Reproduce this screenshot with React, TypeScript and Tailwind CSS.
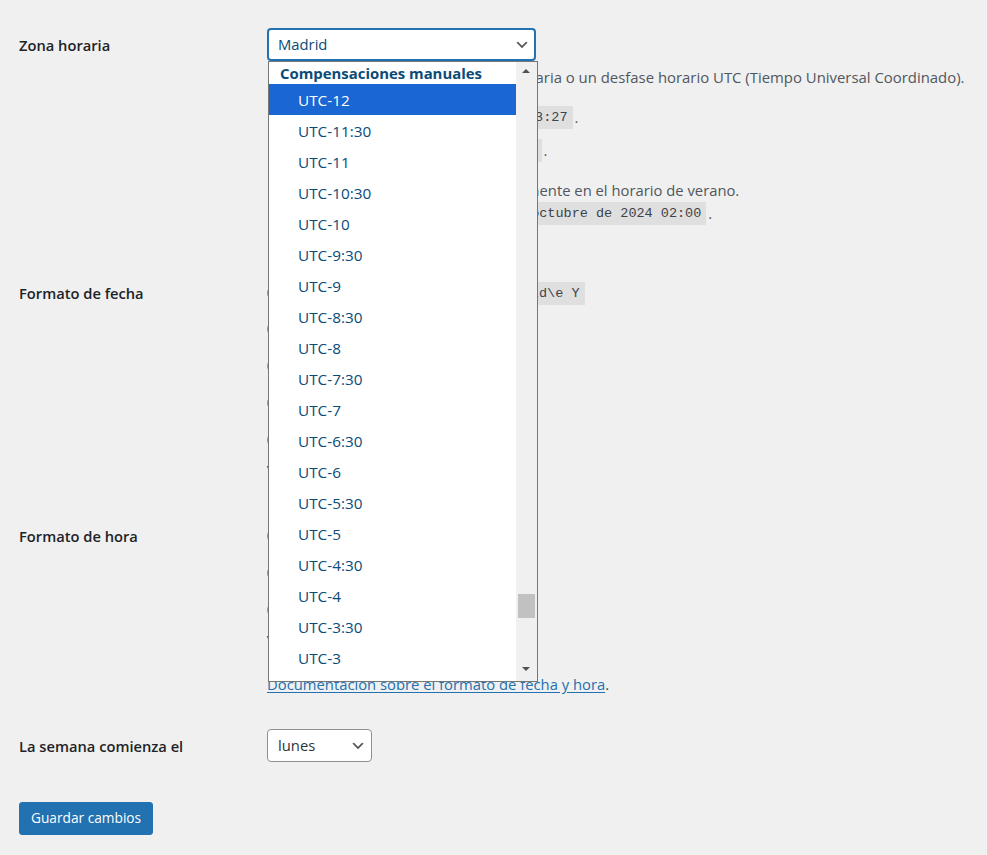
import React from "react";

const ITEMS = [
  "UTC-12", "UTC-11:30", "UTC-11", "UTC-10:30", "UTC-10", "UTC-9:30", "UTC-9", "UTC-8:30", "UTC-8",
  "UTC-7:30", "UTC-7", "UTC-6:30", "UTC-6", "UTC-5:30", "UTC-5", "UTC-4:30", "UTC-4", "UTC-3:30", "UTC-3", "UTC-2:30",
];

function Chevron() {
  return (
    <svg width="16" height="16" viewBox="0 0 20 20" aria-hidden="true">
      <path d="M5 6l5 5 5-5 2 1-7 7-7-7 2-1z" fill="#555" />
    </svg>
  );
}

function Code({ children }: { children: React.ReactNode }) {
  return (
    <code className="bg-[#dfdfdf] px-[5px] pt-[3px] pb-[2px] font-['Liberation_Mono',monospace] text-[13.5px] leading-[18px] text-[#3c434a]">
      {children}
    </code>
  );
}

function Radio({ checked = false }: { checked?: boolean }) {
  return (
    <span className="mr-[4px] flex h-[16px] w-[16px] shrink-0 items-center justify-center rounded-full border border-[#8c8f94] bg-white">
      {checked && <span className="h-[8px] w-[8px] rounded-full bg-[#3582c4]" />}
    </span>
  );
}

function Dropdown() {
  return (
    <div className="absolute left-[1px] top-[33px] z-10 flex h-[621px] w-[270px] border border-[#767676] bg-white">
      <div className="flex-1 overflow-hidden">
        <div className="h-[22px] pl-[11px] text-[14.9px] font-bold leading-[22px] text-[#0a4b78]">Compensaciones manuales</div>
        {ITEMS.map((t, i) => (
          <div
            key={t}
            className={
              i === 0
                ? "h-[31px] bg-[#1a66d3] pl-[29px] text-[15.3px] leading-[32px] text-white"
                : "h-[31px] pl-[29px] text-[15.3px] leading-[32px] text-[#0a4b78]"
            }
          >
            {t}
          </div>
        ))}
      </div>
      <div className="relative w-[21px] bg-[#f0f0f0]">
        <span className="absolute left-[6px] top-[7px] h-0 w-0 border-x-[4px] border-b-[4px] border-x-transparent border-b-[#505050]" />
        <span className="absolute left-[2px] top-[532px] h-[24px] w-[17px] bg-[#c1c1c1]" />
        <span className="absolute left-[6px] top-[605px] h-0 w-0 border-x-[4px] border-t-[4px] border-x-transparent border-t-[#505050]" />
      </div>
    </div>
  );
}

const LINE = "flex h-[20px] items-center whitespace-nowrap";

export default function App() {
  return (
    <div className="relative min-h-[855px] bg-[#f0f0f0] pl-[19px] pt-[28px] font-['Open_Sans',sans-serif] text-[14.8px] text-[#3c434a]">
      {/* Zona horaria */}
      <div className="flex">
        <div className="w-[248px] shrink-0 pt-[7px] text-[14.7px] font-semibold leading-[20px] text-[#1d2327]">Zona horaria</div>
        <div className="min-w-0 flex-1">
          <div className="relative w-[269px]">
            <div className="flex h-[33px] items-center justify-between rounded-[4px] border-2 border-[#2271b1] bg-white pl-[9px] pr-[4px] text-[#0a4b78]">
              <span>Madrid</span>
              <Chevron />
            </div>
            <Dropdown />
          </div>
          <div className={`mt-[6px] ${LINE} text-[14.9px] text-[#50575e]`}>
            Elige una ciudad en tu misma zona horaria o un desfase horario UTC (Tiempo Universal Coordinado).
          </div>
          <div className={`mt-[20px] ${LINE} text-[#50575e]`}>
            <span>La hora universal es&nbsp;</span>
            <Code>08/10/2024 11:43:27</Code>
            <span className="ml-[2px]">.</span>
          </div>
          <div className={`mt-[13px] ${LINE} text-[#50575e]`}>
            <span>La hora local es&nbsp;</span>
            <Code>08/10/2024 13:43:27</Code>
            <span className="ml-[2px]">.</span>
          </div>
          <div className={`mt-[20px] ${LINE} text-[#50575e]`}>
            Esta zona horaria se encuentra actualmente en el horario de verano.
          </div>
          <div className={`mt-[3px] ${LINE} text-[#50575e]`}>
            <span>La hora estándar comienza el:&nbsp;</span>
            <Code>27 de octubre de 2024 02:00</Code>
            <span className="ml-[2px]">.</span>
          </div>
        </div>
      </div>

      {/* Formato de fecha */}
      <div className="mt-[60px] flex">
        <div className="w-[248px] shrink-0 text-[14.7px] font-semibold leading-[20px] text-[#1d2327]">Formato de fecha</div>
        <div className="flex flex-col">
          <label className={LINE}>
            <Radio checked />
            <span className="ml-[4px] w-[162px]">8 de octubre de 2024</span>
            <Code>j \d\e F \d\e Y</Code>
          </label>
          <label className={`mt-[16px] ${LINE}`}>
            <Radio />
            <span className="ml-[4px] w-[162px]">2024-10-08</span>
            <Code>Y-m-d</Code>
          </label>
          <label className={`mt-[17px] ${LINE}`}>
            <Radio />
            <span className="ml-[4px] w-[162px]">10/08/2024</span>
            <Code>m/d/Y</Code>
          </label>
          <label className={`mt-[17px] ${LINE}`}>
            <Radio />
            <span className="ml-[4px] w-[162px]">08/10/2024</span>
            <Code>d/m/Y</Code>
          </label>
          <label className={`mt-[17px] ${LINE}`}>
            <Radio />
            <span className="ml-[4px]">Personalizada:</span>
          </label>
          <div className={`mt-[10px] ${LINE}`}>
            <strong className="font-semibold text-[#1d2327]">Vista previa:</strong>&nbsp;8 de octubre de 2024
          </div>
        </div>
      </div>

      {/* Formato de hora */}
      <div className="mt-[46px] flex">
        <div className="w-[248px] shrink-0 text-[14.7px] font-semibold leading-[20px] text-[#1d2327]">Formato de hora</div>
        <div className="flex flex-col">
          <label className={LINE}>
            <Radio checked />
            <span className="ml-[4px] w-[162px]">13:43</span>
            <Code>H:i</Code>
          </label>
          <label className={`mt-[17px] ${LINE}`}>
            <Radio />
            <span className="ml-[4px] w-[162px]">1:43 pm</span>
            <Code>g:i a</Code>
          </label>
          <label className={`mt-[17px] ${LINE}`}>
            <Radio />
            <span className="ml-[4px]">Personalizada:</span>
          </label>
          <div className={`mt-[10px] ${LINE}`}>
            <strong className="font-semibold text-[#1d2327]">Vista previa:</strong>&nbsp;13:43
          </div>
          <div className={`mt-[24px] ${LINE}`}>
            <a href="#" className="text-[#2271b1] underline underline-offset-[2px]">Documentación sobre el formato de fecha y hora</a>
            <span>.</span>
          </div>
        </div>
      </div>

      {/* La semana comienza el */}
      <div className="mt-[35px] flex">
        <div className="w-[248px] shrink-0 pt-[7px] text-[14.7px] font-semibold leading-[20px] text-[#1d2327]">La semana comienza el</div>
        <div className="flex h-[33px] w-[105px] items-center justify-between rounded-[4px] border border-[#8c8f94] bg-white pl-[10px] pr-[5px] text-[#2c3338]">
          <span>lunes</span>
          <Chevron />
        </div>
      </div>

      <div className="mt-[40px] flex">
        <button className="h-[33px] rounded-[3px] border border-[#2271b1] bg-[#2271b1] px-[11px] text-[13.7px] text-white">
          Guardar cambios
        </button>
      </div>
    </div>
  );
}
